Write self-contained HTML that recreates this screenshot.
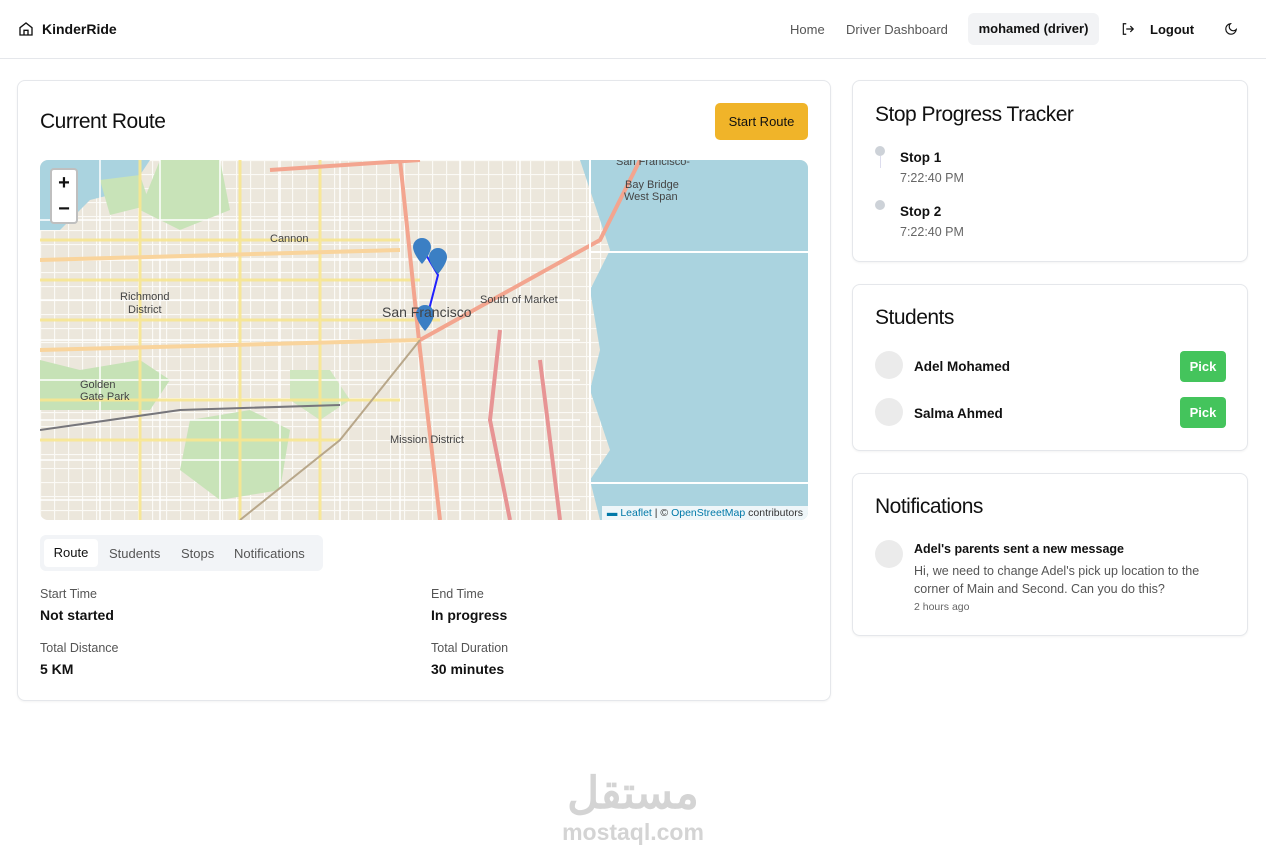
<!DOCTYPE html>
<html><head><meta charset="utf-8"><style>
*{box-sizing:border-box;margin:0;padding:0}
body{width:1266px;height:861px;background:#fff;font-family:"Liberation Sans",sans-serif;color:#111;position:relative;overflow:hidden}
.nav{height:59px;border-bottom:1px solid #e5e7eb;position:relative}
.abs{position:absolute}
.card{position:absolute;border:1px solid #e5e7eb;border-radius:8px;background:#fff;box-shadow:0 1px 2px rgba(0,0,0,.05)}
.h2{font-size:21px;font-weight:500;letter-spacing:-.5px}
.lbl{font-size:12.5px;color:#555}
.val{font-size:14px;font-weight:bold}
.av{width:28px;height:28px;border-radius:50%;background:#ebebeb;position:absolute}
.pick{position:absolute;width:46px;height:31px;background:#44c45c;color:#fff;font-size:13px;font-weight:bold;border-radius:4px;text-align:center;line-height:31px}
</style></head><body>
<div class="nav">
<svg class="abs" style="left:18px;top:21px" width="16" height="16" viewBox="0 0 24 24" fill="none" stroke="#111" stroke-width="2"><path d="M3 10l9-7 9 7v11H3z"/><path d="M9 21v-7h6v7"/></svg>
<div class="abs" style="left:42px;top:21px;font-size:14px;font-weight:bold">KinderRide</div>
<div class="abs" style="left:790px;top:22px;font-size:13px;color:#555">Home</div>
<div class="abs" style="left:846px;top:22px;font-size:13px;color:#555">Driver Dashboard</div>
<div class="abs" style="left:968px;top:13px;width:131px;height:32px;background:#f2f3f5;border-radius:6px;font-size:13px;font-weight:bold;text-align:center;line-height:32px">mohamed (driver)</div>
<svg class="abs" style="left:1121px;top:22px" width="14" height="14" viewBox="0 0 24 24" fill="none" stroke="#111" stroke-width="2"><path d="M9 3H4v18h5"/><path d="M16 17l5-5-5-5M21 12H9"/></svg>
<div class="abs" style="left:1150px;top:22px;font-size:13px;font-weight:bold">Logout</div>
<svg class="abs" style="left:1224px;top:22px" width="14" height="14" viewBox="0 0 24 24" fill="none" stroke="#111" stroke-width="2"><path d="M21 13A9 9 0 1 1 11 3a7 7 0 0 0 10 10z"/></svg>
</div>

<div class="card" style="left:17px;top:80px;width:814px;height:621px">
<div class="abs h2" style="left:22px;top:29px">Current Route</div>
<div class="abs" style="left:697px;top:22px;width:93px;height:37px;background:#f0b429;border-radius:5px;font-size:13px;text-align:center;line-height:37px">Start Route</div>
<div class="abs" style="left:22px;top:79px;width:768px;height:360px;border-radius:8px;overflow:hidden;background:#f2efe9">
<svg width="768" height="360" viewBox="0 0 768 360">
<defs><pattern id="g" width="14" height="14" patternUnits="userSpaceOnUse"><rect width="14" height="14" fill="#ece7dc"/><path d="M0 .5h14M.5 0v14" stroke="#fbfaf6" stroke-width="1.3"/></pattern></defs>
<rect width="768" height="360" fill="url(#g)"/>
<path d="M0 0h110l-20 30-40 10-30 30H0z" fill="#aad3df"/>
<path d="M540 0h228v360H560l-10-40 20-30-20-60 10-40-10-60 20-40z" fill="#aad3df"/>
<path d="M120 0l60 0 10 50-50 20-40-20z" fill="#c8e3b8"/>
<path d="M0 200l40 10 60-10 30 20-20 30-110 0z" fill="#c6e2b6"/>
<path d="M150 260l60-10 40 20-10 60-60 10-40-30z" fill="#c8e3b8"/>
<path d="M250 210l40 0 20 30-30 20-30-20z" fill="#cfe6bf"/>
<path d="M60 20l40-5 10 30-40 10z" fill="#c8e3b8"/>
<g stroke="#fff" stroke-width="1.5">
<path d="M0 60h540M0 100h540M0 140h540M0 180h540M0 220h540M0 260h540M0 300h540M0 340h540M60 0v360M120 0v360M180 0v360M240 0v360M300 0v360M360 0v360M420 0v360M480 0v360"/>
</g>
<g fill="none" stroke-width="3" stroke="#f7e58f" opacity=".9"><path d="M0 80H360M0 120h380M0 160h400M0 240h360M0 280h300M100 0v360M200 0v360M280 0v360"/></g>
<g fill="none" stroke-width="4">
<path d="M360 0L380 190L400 360" stroke="#f3a58f"/>
<path d="M230 10L380 0" stroke="#f3a58f"/>
<path d="M380 180L560 80L600 0" stroke="#f3a58f"/>
<path d="M460 170L450 260L470 360" stroke="#e79494"/>
<path d="M500 200L520 360" stroke="#e79494"/>
<path d="M0 100L360 90" stroke="#f9d49c"/>
<path d="M0 190L380 180" stroke="#f9d49c"/>
<path d="M0 270L140 250L300 245" stroke="#77767b" stroke-width="2"/>
<path d="M380 180L300 280L200 360" stroke="#b8a78a" stroke-width="2"/>
</g>
<path d="M550 92h218M550 323h218M550 0v360" stroke="#fff" stroke-width="2"/>
<path d="M382 88L398 115L385 165" stroke="#2020ff" stroke-width="2" fill="none"/>
<g fill="#3b7fc4"><path d="M382 78a9 9 0 0 1 9 9c0 7-9 17-9 17s-9-10-9-17a9 9 0 0 1 9-9z"/><path d="M398 88a9 9 0 0 1 9 9c0 7-9 17-9 17s-9-10-9-17a9 9 0 0 1 9-9z"/><path d="M385 145a9 9 0 0 1 9 9c0 7-9 17-9 17s-9-10-9-17a9 9 0 0 1 9-9z"/></g>
<g font-family="Liberation Sans" font-size="11" fill="#444">
<text x="80" y="140">Richmond</text><text x="88" y="153">District</text>
<text x="342" y="157" font-size="14">San Francisco</text>
<text x="440" y="143">South of Market</text>
<text x="350" y="283">Mission District</text>
<text x="576" y="5">San Francisco-</text><text x="585" y="28">Bay Bridge</text><text x="584" y="40">West Span</text>
<text x="230" y="82">Cannon</text><text x="40" y="228">Golden</text><text x="40" y="240">Gate Park</text>
</g>
</svg>
<div class="abs" style="left:10px;top:8px;width:28px;height:56px;background:#fff;border:2px solid rgba(0,0,0,.25);border-radius:4px;font-size:20px;font-weight:bold;text-align:center;line-height:26px">+<br>−</div>
<div class="abs" style="right:0;bottom:0;background:rgba(255,255,255,.8);font-size:10.5px;padding:1px 5px;color:#333"><span style="color:#0078a8">▬ Leaflet</span> | © <span style="color:#0078a8">OpenStreetMap</span> contributors</div>
</div>
<div class="abs" style="left:22px;top:454px;width:283px;height:36px;background:#f2f4f7;border-radius:6px"></div>
<div class="abs" style="left:26px;top:458px;width:54px;height:28px;background:#fff;border-radius:4px;font-size:13px;text-align:center;line-height:28px">Route</div>
<div class="abs" style="left:91px;top:465px;font-size:13px;color:#555">Students</div>
<div class="abs" style="left:163px;top:465px;font-size:13px;color:#555">Stops</div>
<div class="abs" style="left:216px;top:465px;font-size:13px;color:#555">Notifications</div>
<div class="abs lbl" style="left:22px;top:506px">Start Time</div><div class="abs val" style="left:22px;top:526px">Not started</div>
<div class="abs lbl" style="left:413px;top:506px">End Time</div><div class="abs val" style="left:413px;top:526px">In progress</div>
<div class="abs lbl" style="left:22px;top:560px">Total Distance</div><div class="abs val" style="left:22px;top:580px">5 KM</div>
<div class="abs lbl" style="left:413px;top:560px">Total Duration</div><div class="abs val" style="left:413px;top:580px">30 minutes</div>
</div>

<div class="card" style="left:852px;top:80px;width:396px;height:182px">
<div class="abs h2" style="left:22px;top:22px">Stop Progress Tracker</div>
<div class="abs" style="left:22px;top:65px;width:10px;height:10px;border-radius:50%;background:#cdd2d8"></div>
<div class="abs" style="left:27px;top:75px;width:1px;height:12px;background:#dde"></div>
<div class="abs" style="left:47px;top:69px;font-size:13.5px;font-weight:bold">Stop 1</div>
<div class="abs" style="left:47px;top:90px;font-size:12.5px;color:#666">7:22:40 PM</div>
<div class="abs" style="left:22px;top:119px;width:10px;height:10px;border-radius:50%;background:#cdd2d8"></div>
<div class="abs" style="left:47px;top:123px;font-size:13.5px;font-weight:bold">Stop 2</div>
<div class="abs" style="left:47px;top:144px;font-size:12.5px;color:#666">7:22:40 PM</div>
</div>

<div class="card" style="left:852px;top:284px;width:396px;height:167px">
<div class="abs h2" style="left:22px;top:21px">Students</div>
<div class="av" style="left:22px;top:66px"></div>
<div class="abs" style="left:61px;top:74px;font-size:13.5px;font-weight:bold">Adel Mohamed</div>
<div class="pick" style="left:327px;top:66px">Pick</div>
<div class="av" style="left:22px;top:113px"></div>
<div class="abs" style="left:61px;top:121px;font-size:13.5px;font-weight:bold">Salma Ahmed</div>
<div class="pick" style="left:327px;top:112px">Pick</div>
</div>

<div class="card" style="left:852px;top:473px;width:396px;height:163px">
<div class="abs h2" style="left:22px;top:21px">Notifications</div>
<div class="av" style="left:22px;top:66px"></div>
<div class="abs" style="left:61px;top:68px;font-size:12.5px;font-weight:bold">Adel's parents sent a new message</div>
<div class="abs" style="left:61px;top:88px;width:310px;font-size:12.5px;color:#555;line-height:18px">Hi, we need to change Adel's pick up location to the corner of Main and Second. Can you do this?</div>
<div class="abs" style="left:61px;top:127px;font-size:10.5px;color:#666">2 hours ago</div>
</div>

<div class="abs" style="left:545px;top:770px;width:176px;text-align:center;color:#d4d4d4;font-family:'Liberation Sans','Noto Sans CJK SC',sans-serif">
<div style="font-size:44px;font-weight:bold;line-height:48px">مستقل</div>
<div style="font-size:23px;font-weight:bold;line-height:28px">mostaql.com</div>
</div>
</body></html>
